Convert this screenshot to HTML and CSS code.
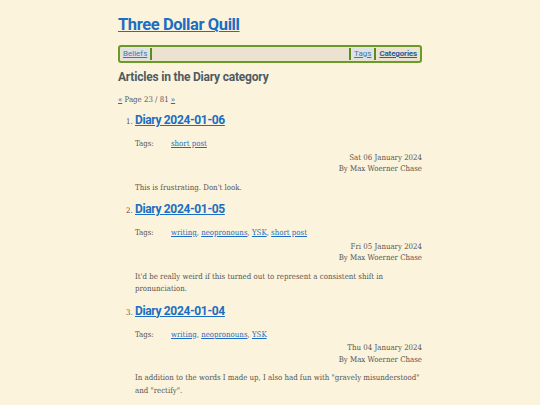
FILE: index.html
```html
<!DOCTYPE html>
<html>
<head>
<meta charset="utf-8">
<link rel="stylesheet" href="styles.css">
</head>
<body>
<div class="page">
  <header class="site-head">
    <h1 class="site-title"><a href="#">Three Dollar Quill</a></h1>
    <nav class="nav">
      <a class="nav-link" href="#">Beliefs</a>
      <span class="nav-sep"></span>
      <span class="nav-fill"></span>
      <span class="nav-sep"></span>
      <a class="nav-link" href="#">Tags</a>
      <span class="nav-sep"></span>
      <a class="nav-link nav-current" href="#">Categories</a>
    </nav>
  </header>
  <main>
    <h2 class="cat-title">Articles in the Diary category</h2>
    <p class="pager"><a href="#">«</a> Page 23 / 81 <a href="#">»</a></p>
    <ol class="articles">
      <li class="article">
        <h3 class="art-title"><a href="#">Diary 2024-01-06</a></h3>
        <div class="tags"><span class="tags-label">Tags:</span><span class="tags-list"><a href="#">short post</a></span></div>
        <div class="meta"><div>Sat 06 January 2024</div><div>By Max Woerner Chase</div></div>
        <p class="summary">This is frustrating. Don't look.</p>
      </li>
      <li class="article">
        <h3 class="art-title"><a href="#">Diary 2024-01-05</a></h3>
        <div class="tags"><span class="tags-label">Tags:</span><span class="tags-list"><a href="#">writing</a>, <a href="#">neopronouns</a>, <a href="#">YSK</a>, <a href="#">short post</a></span></div>
        <div class="meta"><div>Fri 05 January 2024</div><div>By Max Woerner Chase</div></div>
        <p class="summary">It'd be really weird if this turned out to represent a consistent shift in pronunciation.</p>
      </li>
      <li class="article">
        <h3 class="art-title"><a href="#">Diary 2024-01-04</a></h3>
        <div class="tags"><span class="tags-label">Tags:</span><span class="tags-list"><a href="#">writing</a>, <a href="#">neopronouns</a>, <a href="#">YSK</a></span></div>
        <div class="meta"><div>Thu 04 January 2024</div><div>By Max Woerner Chase</div></div>
        <p class="summary">In addition to the words I made up, I also had fun with "gravely misunderstood" and "rectify".</p>
      </li>
    </ol>
  </main>
</div>
</body>
</html>
```
FILE: styles.css
```css
html, body {
  margin: 0;
  padding: 0;
  background: #fcf3dc;
}
body {
  font-family: "DejaVu Serif Condensed", "DejaVu Serif", serif;
  color: #555555;
}
.page {
  width: 304px;
  margin: 0 auto;
  padding-top: 14px;
}
a {
  color: #1b6ec2;
}
.site-title {
  font-family: Roboto, sans-serif;
  font-size: 16.5px;
  font-weight: 700;
  letter-spacing: -0.4px;
  line-height: 22px;
  margin: 0 0 9px 0;
}
.site-title a {
  color: #1b6ec2;
}
.nav {
  display: flex;
  align-items: stretch;
  height: 12px;
  border: 2px solid #6b9a28;
  border-radius: 3px;
  background: #ebe3cf;
  padding: 1px 1px;
  font-family: Roboto, sans-serif;
  font-size: 8px;
  line-height: 12px;
}
.nav-link {
  padding: 0 2px;
  background: #dfe2e0;
  color: #3b78b8;
}
.nav-current {
  font-weight: 700;
  background: transparent;
  color: #2a5b9e;
  letter-spacing: -0.15px;
}
.nav-sep {
  width: 2px;
  background: #5d8a1f;
  margin: 0 1px;
}
.nav-fill {
  flex: 1;
}
.cat-title {
  font-family: Roboto, sans-serif;
  font-size: 12px;
  font-weight: 700;
  letter-spacing: -0.2px;
  color: #505a62;
  margin: 5px 0 0 0;
  line-height: 18px;
}
.pager {
  font-size: 7.8px;
  line-height: 10px;
  margin: 9px 0 0 0;
}
.articles {
  margin: 6px 0 0 0;
  padding-left: 17px;
  font-size: 7.8px;
}
.article {
  padding: 0;
}
.art-title {
  font-family: Roboto, sans-serif;
  font-size: 12px;
  font-weight: 700;
  letter-spacing: -0.35px;
  line-height: 18px;
  margin: 0;
}
.tags {
  display: flex;
  margin-top: 9px;
  line-height: 12px;
}
.tags-label {
  width: 36px;
}
.meta {
  text-align: right;
  line-height: 11.5px;
  margin-top: 1.5px;
}
.summary {
  margin: 7px 0 6px 0;
  line-height: 12.5px;
}
```
